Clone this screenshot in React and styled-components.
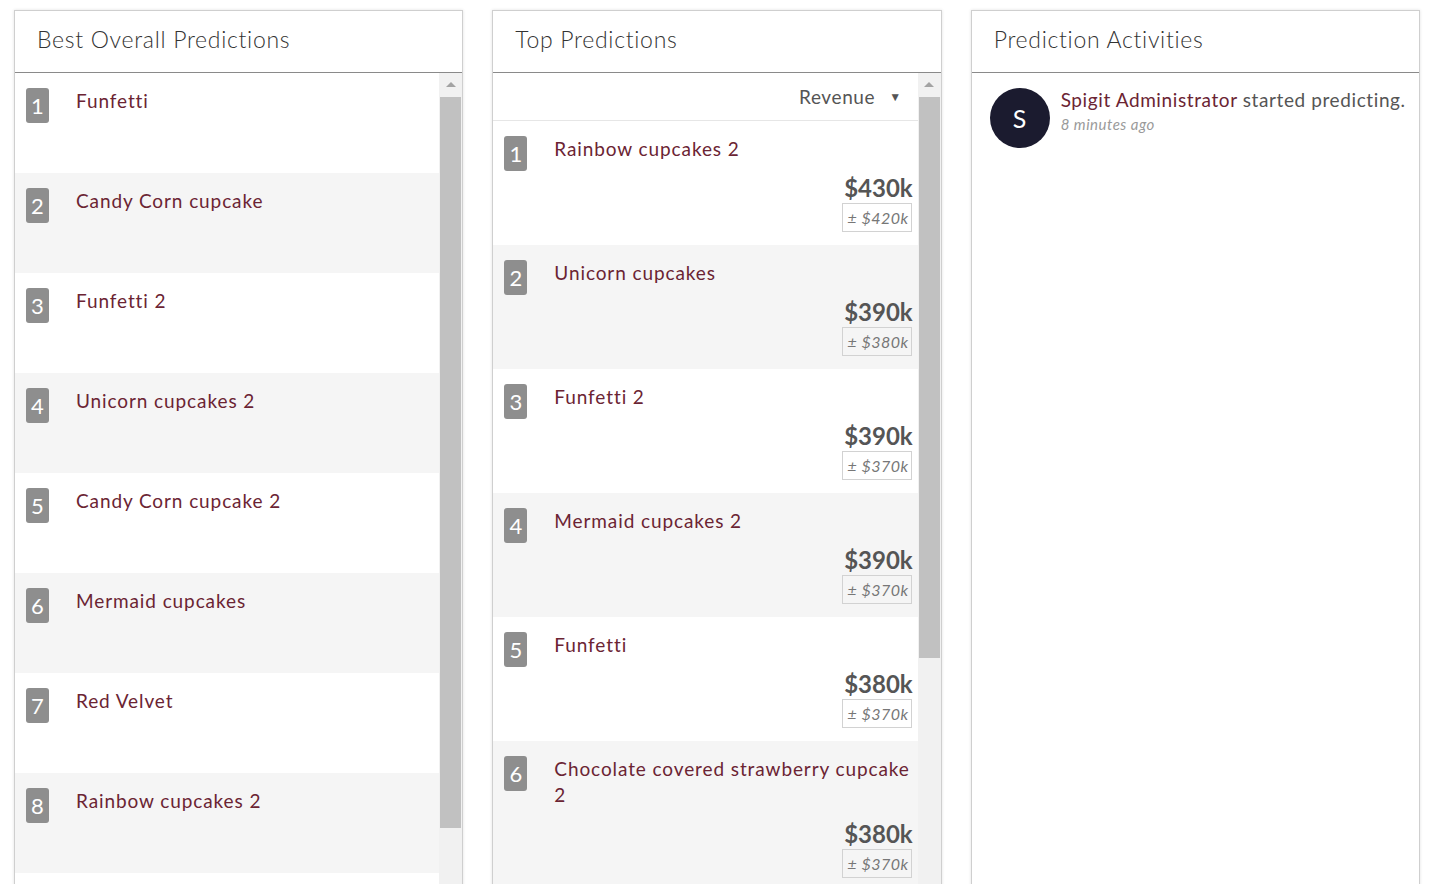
import React from "react";
import styled, { createGlobalStyle } from "styled-components";

const Global = createGlobalStyle`
  html, body { margin: 0; padding: 0; background: #fff; overflow: hidden; }
  body { font-family: Lato, "Open Sans", "Liberation Sans", sans-serif; color: #555; }
  * { box-sizing: border-box; }
`;

const Page = styled.div`
  display: grid;
  grid-template-columns: repeat(3, 1fr);
  gap: 29px;
  padding: 10px 20px 0 14px;
  height: 884px;
`;

const Panel = styled.section`
  border: 1px solid #cfcfcf;
  box-shadow: 0 0 3px rgba(0, 0, 0, 0.12);
  height: 920px;
  display: flex;
  flex-direction: column;
  background: #fff;
`;

const Header = styled.header`
  height: 62px;
  border-bottom: 1px solid #8a8a8a;
  display: flex;
  align-items: center;
  padding-left: 22px;
  padding-bottom: 6px;
`;

const Title = styled.h2`
  margin: 0;
  font-size: 23px;
  font-weight: 300;
  color: #333;
  letter-spacing: 0.7px;
`;

const Body = styled.div`
  flex: 1;
  display: flex;
  min-height: 0;
`;

const Content = styled.div`
  flex: 1;
  display: flex;
  flex-direction: column;
  min-width: 0;
`;

const ScrollBar = styled.div`
  width: 23px;
  background: #f1f1f1;
  display: flex;
  flex-direction: column;
  flex-shrink: 0;
`;

const ScrollArrow = styled.div`
  height: 24px;
  display: flex;
  justify-content: center;
  align-items: center;
  &::before {
    content: "";
    border-left: 5px solid transparent;
    border-right: 5px solid transparent;
    border-bottom: 5px solid #a3a3a3;
    margin-top: -2px;
  }
`;

const Thumb = styled.div`
  margin: 0 1px;
  background: #c1c1c1;
`;

const Row = styled.div`
  display: grid;
  grid-template-columns: 50px 1fr;
  background: ${(p) => (p.$alt ? "#f5f5f5" : "#fff")};
  padding: ${(p) => (p.$tall ? "15px 3px 13px 11px" : "15px 10px 0 11px")};
  height: ${(p) => (p.$tall ? "auto" : "100px")};
  flex-shrink: 0;
`;

const Badge = styled.span`
  justify-self: start;
  height: 35px;
  min-width: 23px;
  padding: 0 5px;
  border-radius: 3px;
  background: #8e8e8e;
  color: #fff;
  font-size: 22px;
  line-height: 35px;
  text-align: center;
`;

const Name = styled.div`
  color: #6b2433;
  font-size: 19px;
  line-height: 26px;
  letter-spacing: 0.9px;
  padding-right: 4px;
`;

const Info = styled.div`
  display: flex;
  flex-direction: column;
  align-items: flex-end;
`;

const Price = styled.div`
  margin-top: 12px;
  font-size: 24px;
  font-weight: 700;
  line-height: 28px;
  color: #555;
  margin-right: 2px;
`;

const Range = styled.div`
  margin-top: 1px;
  height: 29px;
  padding: 0 2px 0 4px;
  border: 1px solid #d2d2d2;
  font-size: 16px;
  font-style: italic;
  letter-spacing: 0.5px;
  line-height: 27px;
  color: #777;
  margin-right: 3px;
`;

const SortBar = styled.div`
  height: 48px;
  border-bottom: 1px solid #e6e6e6;
  display: flex;
  justify-content: flex-end;
  align-items: center;
  padding-right: 16px;
  gap: 14px;
  font-size: 19px;
  letter-spacing: 0.6px;
  color: #555;
  flex-shrink: 0;
`;

const Caret = styled.span`
  font-size: 12px;
  color: #555;
`;

const Activity = styled.div`
  display: flex;
  gap: 11px;
  padding: 15px 8px 0 18px;
`;

const Avatar = styled.div`
  width: 60px;
  height: 60px;
  border-radius: 50%;
  background: #1b1b2f;
  color: #fff;
  font-size: 25px;
  display: flex;
  align-items: center;
  justify-content: center;
  flex-shrink: 0;
`;

const ActText = styled.div`
  font-size: 19px;
  line-height: 24px;
  letter-spacing: 0.6px;
  color: #555;
  white-space: nowrap;
`;

const UserLink = styled.span`
  color: #6b2433;
`;

const Time = styled.div`
  font-size: 15px;
  font-style: italic;
  letter-spacing: 0.5px;
  color: #9a9a9a;
  line-height: 20px;
  margin-top: 2px;
`;

const best = [
  "Funfetti",
  "Candy Corn cupcake",
  "Funfetti 2",
  "Unicorn cupcakes 2",
  "Candy Corn cupcake 2",
  "Mermaid cupcakes",
  "Red Velvet",
  "Rainbow cupcakes 2",
];

const top = [
  ["Rainbow cupcakes 2", "$430k", "$420k"],
  ["Unicorn cupcakes", "$390k", "$380k"],
  ["Funfetti 2", "$390k", "$370k"],
  ["Mermaid cupcakes 2", "$390k", "$370k"],
  ["Funfetti", "$380k", "$370k"],
  ["Chocolate covered strawberry cupcake 2", "$380k", "$370k"],
];

export default function App() {
  return (
    <>
      <Global />
      <Page>
        <Panel>
          <Header>
            <Title>Best Overall Predictions</Title>
          </Header>
          <Body>
            <Content>
              {best.map((n, i) => (
                <Row key={i} $alt={i % 2 === 1}>
                  <Badge>{i + 1}</Badge>
                  <Name>{n}</Name>
                </Row>
              ))}
            </Content>
            <ScrollBar>
              <ScrollArrow />
              <Thumb style={{ height: 731 }} />
            </ScrollBar>
          </Body>
        </Panel>

        <Panel>
          <Header>
            <Title>Top Predictions</Title>
          </Header>
          <Body>
            <Content>
              <SortBar>
                <span>Revenue</span>
                <Caret>▼</Caret>
              </SortBar>
              {top.map(([n, p, r], i) => (
                <Row key={i} $alt={i % 2 === 1} $tall>
                  <Badge>{i + 1}</Badge>
                  <div>
                    <Name>{n}</Name>
                    <Info>
                      <Price>{p}</Price>
                      <Range>± {r}</Range>
                    </Info>
                  </div>
                </Row>
              ))}
            </Content>
            <ScrollBar>
              <ScrollArrow />
              <Thumb style={{ height: 561 }} />
            </ScrollBar>
          </Body>
        </Panel>

        <Panel>
          <Header>
            <Title>Prediction Activities</Title>
          </Header>
          <Activity>
            <Avatar>S</Avatar>
            <ActText>
              <UserLink>Spigit Administrator</UserLink> started predicting.
              <Time>8 minutes ago</Time>
            </ActText>
          </Activity>
        </Panel>
      </Page>
    </>
  );
}
